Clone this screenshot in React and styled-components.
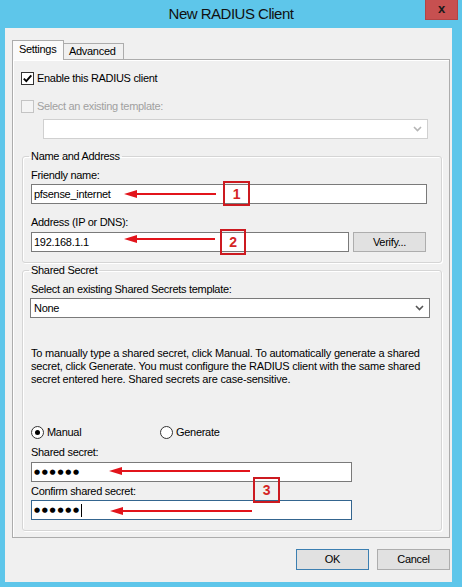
import styled, { createGlobalStyle } from 'styled-components';

const AZUL = '#5ec6ea';
const ROJO = '#e2141b';

const EstiloGlobal = createGlobalStyle`
  *, *::before, *::after { box-sizing: border-box; }
  html, body { margin: 0; padding: 0; background: ${AZUL}; }
`;

const Ventana = styled.div`
  position: relative;
  width: 462px;
  height: 587px;
  background: ${AZUL};
  display: flex;
  flex-direction: column;
  font-family: "Liberation Sans", Arial, sans-serif;
  font-size: 11px;
  line-height: 13px;
  letter-spacing: -0.3px;
  color: #000;
  overflow: hidden;
`;

const BarraTitulo = styled.div`
  height: 28px;
  flex-shrink: 0;
  display: grid;
  grid-template-columns: 1fr auto 1fr;
  align-items: start;
`;

const Titulo = styled.div`
  grid-column: 2;
  padding-top: 5px;
  font-size: 15px;
  line-height: 18px;
  letter-spacing: -0.5px;
  color: #111;
`;

const BotonCerrar = styled.div`
  grid-column: 3;
  justify-self: end;
  width: 33px;
  height: 20px;
  margin-right: 4px;
  background: #c75050;
  border: 1px solid #b34444;
  border-top: none;
  display: flex;
  align-items: center;
  justify-content: center;
  font: bold 13px "Liberation Sans", Arial, sans-serif;
  color: #1a1a1a;
  padding-bottom: 2px;
`;

const Cliente = styled.div`
  flex: 1;
  margin: 0 10px 5px 5px;
  background: #f0f0f0;
  padding: 12px 2px 0 7px;
  display: flex;
  flex-direction: column;
`;

const FilaPestanas = styled.div`
  display: flex;
  align-items: flex-end;
  height: 20px;
  margin-bottom: -1px;
  position: relative;
  z-index: 1;
`;

const Pestana = styled.div`
  width: ${p => p.$ancho}px;
  height: ${p => (p.$activa ? 20 : 16)}px;
  margin-bottom: ${p => (p.$activa ? 0 : 1)}px;
  border: 1px solid #acacac;
  border-bottom: none;
  border-left: ${p => (p.$activa ? '1px solid #acacac' : 'none')};
  background: ${p => (p.$activa ? '#fafafa' : '#f0f0f0')};
  padding: ${p => (p.$activa ? '2px 0 0 6px' : '1px 0 0 5px')};
`;

const Panel = styled.div`
  border: 1px solid #acacac;
  box-shadow: inset 1px 1px 0 #fff;
  background: #f0f0f0;
  padding: 12px 7px 6px 8px;
  display: flex;
  flex-direction: column;
`;

const FilaCasilla = styled.label`
  display: flex;
  align-items: center;
  gap: 3px;
  height: 13px;
  margin-top: ${p => p.$mt || 0}px;
  color: ${p => (p.$deshabilitado ? '#a0a0a0' : '#000')};
`;

const Casilla = styled.span`
  width: 13px;
  height: 13px;
  border: 1px solid ${p => (p.$deshabilitado ? '#c4c4c4' : '#333')};
  background: ${p => (p.$deshabilitado ? '#f4f4f4' : '#fff')};
  display: flex;
  align-items: center;
  justify-content: center;
`;

const Combo = styled.div`
  width: ${p => p.$ancho}px;
  height: 20px;
  margin: ${p => p.$margen || '0'};
  border: 1px solid ${p => (p.$deshabilitado ? '#d0d0d0' : '#7a7a7a')};
  background: #fff;
  display: flex;
  align-items: center;
  justify-content: space-between;
  padding: 0 5px 0 3px;
`;

const Grupo = styled.fieldset`
  margin: ${p => p.$mt}px 0 0 1px;
  padding: 6px 14px 10px 8px;
  border: 1px solid #d5d5d5;
  border-radius: 3px;
  box-shadow: inset 1px 1px 0 #fff, 1px 1px 0 #fff;
  min-inline-size: 0;
`;

const Leyenda = styled.legend`
  padding: 0 2px;
  margin-left: -2px;
  line-height: 13px;
`;

const Etiqueta = styled.div`
  height: 13px;
  margin-top: ${p => p.$mt || 0}px;
  white-space: nowrap;
`;

const Entrada = styled.input`
  display: block;
  width: ${p => p.$ancho}px;
  height: 20px;
  margin-top: ${p => p.$mt || 0}px;
  border: 1px solid #7a7a7a;
  border-radius: 0;
  background: #fff;
  padding: 0 2px;
  font: inherit;
  letter-spacing: inherit;
  color: #000;
  outline: none;
`;

const CampoClave = styled.div`
  width: ${p => p.$ancho}px;
  height: 20px;
  margin-top: ${p => p.$mt || 0}px;
  border: 1px solid ${p => (p.$foco ? '#34658f' : '#7a7a7a')};
  background: #fff;
  padding: 0 2px;
  display: flex;
  align-items: center;
`;

const Puntos = styled.span`
  font-family: "DejaVu Sans", sans-serif;
  font-size: 7px;
  letter-spacing: 1.7px;
  line-height: 13px;
`;

const Cursor = styled.span`
  width: 1px;
  height: 13px;
  background: #000;
`;

const FilaDireccion = styled.div`
  display: flex;
  gap: 4px;
  margin-top: 3px;
`;

const Boton = styled.button`
  width: 73px;
  height: ${p => p.$alto || 20}px;
  border: 1px solid ${p => (p.$predeterminado ? '#3c7fb1' : '#adadad')};
  border-radius: 0;
  background: #e1e1e1;
  padding: 0;
  font: inherit;
  letter-spacing: inherit;
  color: #000;
`;

const Parrafo = styled.p`
  margin: 29px 0 0;
  white-space: nowrap;
  line-height: 13px;
  letter-spacing: -0.2px;
`;

const FilaRadio = styled.div`
  display: flex;
  height: 13px;
  margin-top: 40px;
`;

const OpcionRadio = styled.label`
  display: flex;
  align-items: center;
  gap: 3px;
  width: ${p => p.$ancho}px;
`;

const Radio = styled.span`
  width: 13px;
  height: 13px;
  border-radius: 50%;
  border: 1px solid #333;
  background: #fff;
  display: flex;
  align-items: center;
  justify-content: center;
  &::after {
    content: '';
    width: 5px;
    height: 5px;
    border-radius: 50%;
    background: ${p => (p.$marcado ? '#000' : 'transparent')};
  }
`;

const PieBotones = styled.div`
  display: flex;
  justify-content: flex-end;
  gap: 8px;
  margin-top: 11px;
`;

const Anotaciones = styled.svg`
  position: absolute;
  left: 0;
  top: 0;
  pointer-events: none;
`;

const Recuadro = styled.div`
  position: absolute;
  left: ${p => p.$x}px;
  top: ${p => p.$y}px;
  width: ${p => p.$w}px;
  height: ${p => p.$h}px;
  border: 2px solid #cc1a20;
  color: #d42424;
  font: bold 14px "Liberation Sans", Arial, sans-serif;
  display: flex;
  align-items: center;
  justify-content: center;
`;

const Chevron = ({ color }) => (
  <svg width="9" height="6" viewBox="0 0 9 6">
    <path d="M1 1 L4.5 4.5 L8 1" fill="none" stroke={color} strokeWidth="1.6" />
  </svg>
);

const Flecha = ({ x, y, fin }) => (
  <g>
    <line x1={x + 10} y1={y} x2={fin} y2={y} stroke={ROJO} strokeWidth="2" />
    <polygon points={`${x},${y} ${x + 13},${y - 4} ${x + 13},${y + 4}`} fill={ROJO} />
  </g>
);

const flechas = [
  { x: 124, y: 194, fin: 216 },
  { x: 124, y: 239, fin: 215 },
  { x: 109, y: 471, fin: 250 },
  { x: 110, y: 511, fin: 252 },
];

const recuadros = [
  { n: 1, x: 223, y: 181, w: 27, h: 25 },
  { n: 2, x: 220, y: 229, w: 26, h: 26 },
  { n: 3, x: 253, y: 477, w: 27, h: 26 },
];

export default function App() {
  return (
    <>
      <EstiloGlobal />
      <Ventana>
        <BarraTitulo>
          <Titulo>New RADIUS Client</Titulo>
          <BotonCerrar>x</BotonCerrar>
        </BarraTitulo>
        <Cliente>
          <FilaPestanas>
            <Pestana $activa $ancho={52}>Settings</Pestana>
            <Pestana $ancho={60}>Advanced</Pestana>
          </FilaPestanas>
          <Panel>
            <FilaCasilla>
              <Casilla>
                <svg width="11" height="11" viewBox="0 0 11 11">
                  <path d="M1.8 5.6 L4.3 8.2 L9.3 2.3" fill="none" stroke="#000" strokeWidth="1.9" />
                </svg>
              </Casilla>
              Enable this RADIUS client
            </FilaCasilla>
            <FilaCasilla $mt={15} $deshabilitado>
              <Casilla $deshabilitado />
              Select an existing template:
            </FilaCasilla>
            <Combo $deshabilitado $ancho={385} $margen="6px 0 0 22px">
              <span />
              <Chevron color="#b5b5b5" />
            </Combo>

            <Grupo $mt={11}>
              <Leyenda>Name and Address</Leyenda>
              <Etiqueta>Friendly name:</Etiqueta>
              <Entrada $ancho={396} $mt={2} readOnly value="pfsense_internet" />
              <Etiqueta $mt={12}>Address (IP or DNS):</Etiqueta>
              <FilaDireccion>
                <Entrada $ancho={318} readOnly value="192.168.1.1" />
                <Boton>Verify...</Boton>
              </FilaDireccion>
            </Grupo>

            <Grupo $mt={1}>
              <Leyenda>Shared Secret</Leyenda>
              <Etiqueta>Select an existing Shared Secrets template:</Etiqueta>
              <Combo $ancho={400} $margen="2px 0 0 -1px">
                <span>None</span>
                <Chevron color="#555" />
              </Combo>
              <Parrafo>
                To manually type a shared secret, click Manual. To automatically generate a shared
                <br />
                secret, click Generate. You must configure the RADIUS client with the same shared
                <br />
                secret entered here. Shared secrets are case-sensitive.
              </Parrafo>
              <FilaRadio>
                <OpcionRadio $ancho={129}>
                  <Radio $marcado />
                  Manual
                </OpcionRadio>
                <OpcionRadio $ancho={120}>
                  <Radio />
                  Generate
                </OpcionRadio>
              </FilaRadio>
              <Etiqueta $mt={7}>Shared secret:</Etiqueta>
              <CampoClave $ancho={321} $mt={3}>
                <Puntos>●●●●●●</Puntos>
              </CampoClave>
              <Etiqueta $mt={3}>Confirm shared secret:</Etiqueta>
              <CampoClave $ancho={321} $mt={2} $foco>
                <Puntos>●●●●●●</Puntos>
                <Cursor />
              </CampoClave>
            </Grupo>
          </Panel>
          <PieBotones>
            <Boton $predeterminado $alto={21}>OK</Boton>
            <Boton $alto={21}>Cancel</Boton>
          </PieBotones>
        </Cliente>

        <Anotaciones width="462" height="587" viewBox="0 0 462 587">
          {flechas.map((f, i) => (
            <Flecha key={i} {...f} />
          ))}
        </Anotaciones>
        {recuadros.map(r => (
          <Recuadro key={r.n} $x={r.x} $y={r.y} $w={r.w} $h={r.h}>
            {r.n}
          </Recuadro>
        ))}
      </Ventana>
    </>
  );
}
